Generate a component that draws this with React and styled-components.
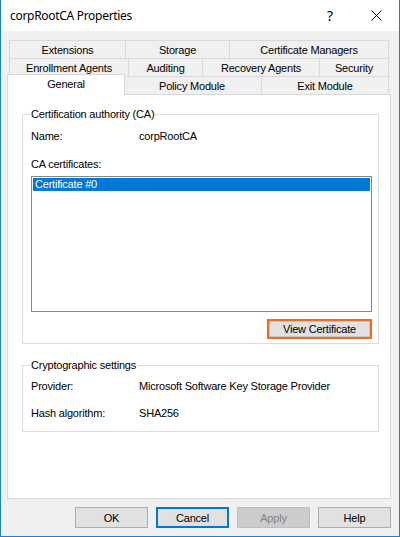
import React from "react";
import styled, { createGlobalStyle } from "styled-components";

const Global = createGlobalStyle`
  html, body { margin: 0; padding: 0; background: #ffffff; }
  body { font-family: "Liberation Sans", Arial, sans-serif; font-size: 11px; letter-spacing: -0.2px; color: #000; }
`;

const Window = styled.div`
  width: 400px;
  height: 537px;
  box-sizing: border-box;
  border: 1px solid #1883d7;
  border-top: none;
  background: #f0f0f0;
  display: flex;
  flex-direction: column;
`;

const TitleBar = styled.div`
  height: 31px;
  background: #ffffff;
  display: flex;
  align-items: center;
  padding-left: 9px;
  flex-shrink: 0;
`;

const Title = styled.div`
  flex: 1;
  font-family: "Noto Sans", "Open Sans", sans-serif;
  font-size: 12px;
  letter-spacing: -0.3px;
  color: #000;
`;

const HelpGlyph = styled.div`
  width: 46px;
  text-align: center;
  font-family: "Noto Sans", sans-serif;
  font-size: 14px;
  color: #000;
`;

const CloseBtn = styled.div`
  width: 46px;
  height: 31px;
  display: flex;
  align-items: center;
  justify-content: center;
`;

const Body = styled.div`
  flex: 1;
  display: flex;
  flex-direction: column;
  padding: 9px 8px 0 6px;
`;

const TabStrip = styled.div`
  display: flex;
  flex-direction: column;
`;

const TabRow = styled.div`
  display: flex;
  align-items: flex-end;
  padding-left: 2px;
  margin-top: ${(p) => p.$mt || 0}px;
  height: ${(p) => p.$h || 19}px;
`;

const Tab = styled.div`
  width: ${(p) => (p.$selected ? p.$w + 4 : p.$w)}px;
  height: ${(p) => (p.$selected ? 21 : 19)}px;
  box-sizing: border-box;
  display: flex;
  align-items: center;
  justify-content: center;
  background: ${(p) => (p.$selected ? "#ffffff" : "#f0f0f0")};
  border: 1px solid #d9d9d9;
  border-left: none;
  ${(p) => (p.$selected ? "border-bottom: none; margin: 0 -2px; position: relative; z-index: 2; padding-bottom: 3px;" : "")}
  &:first-child { border-left: 1px solid #d9d9d9; }
  white-space: nowrap;
`;

const Panel = styled.div`
  width: 384px;
  height: 405px;
  box-sizing: border-box;
  margin-top: -1px;
  background: #ffffff;
  border: 1px solid #d9d9d9;
  padding: 12px 11px 0 14px;
  display: flex;
  flex-direction: column;
  position: relative;
  z-index: 1;
`;

const Group = styled.fieldset`
  margin: ${(p) => p.$mt || 0}px 0 0 0;
  padding: 0 6px ${(p) => p.$pb || 0}px 8px;
  border: 1px solid #dcdcdc;
  min-width: 0;
  display: flex;
  flex-direction: column;
`;

const Legend = styled.legend`
  margin-left: -1px;
  padding: 0 1px;
  line-height: 14px;
  font-size: 11px;
`;

const Row = styled.div`
  display: flex;
  line-height: 13px;
  margin-top: ${(p) => p.$mt || 0}px;
`;

const Label = styled.div`
  width: 108px;
  flex-shrink: 0;
`;

const Value = styled.div``;

const ListBox = styled.div`
  margin-top: 5px;
  height: 136px;
  box-sizing: border-box;
  border: 1px solid #828790;
  padding: 1px;
  background: #fff;
`;

const ListItem = styled.div`
  height: 13px;
  line-height: 13px;
  padding-left: 2px;
  background: ${(p) => (p.$selected ? "#0078d7" : "transparent")};
  color: ${(p) => (p.$selected ? "#ffffff" : "#000")};
`;

const ButtonRight = styled.div`
  display: flex;
  justify-content: flex-end;
  margin-top: 7px;
`;

const HighlightButton = styled.div`
  width: 105px;
  height: 20px;
  box-sizing: border-box;
  border: 2px solid #f26a21;
  box-shadow: inset 0 0 0 1px #c9c9c9;
  background: #e1e1e1;
  display: flex;
  align-items: center;
  justify-content: center;
`;

const Footer = styled.div`
  display: flex;
  justify-content: flex-end;
  gap: 8px;
  margin-top: 8px;
`;

const DlgButton = styled.div`
  width: 73px;
  height: 21px;
  box-sizing: border-box;
  display: flex;
  align-items: center;
  justify-content: center;
  background: ${(p) => (p.$disabled ? "#cccccc" : "#e1e1e1")};
  color: ${(p) => (p.$disabled ? "#838383" : "#000")};
  border: ${(p) => (p.$focused ? "2px solid #0078d7" : p.$disabled ? "1px solid #bfbfbf" : "1px solid #adadad")};
`;

const rows = [
  [
    { t: "Extensions", w: 117 },
    { t: "Storage", w: 104 },
    { t: "Certificate Managers", w: 159 },
  ],
  [
    { t: "Enrollment Agents", w: 120 },
    { t: "Auditing", w: 74 },
    { t: "Recovery Agents", w: 117 },
    { t: "Security", w: 69 },
  ],
];

const lastRow = [
  { t: "General", w: 114, sel: true },
  { t: "Policy Module", w: 139 },
  { t: "Exit Module", w: 127 },
];

export default function App() {
  return (
    <>
      <Global />
      <Window>
        <TitleBar>
          <Title>corpRootCA Properties</Title>
          <HelpGlyph>?</HelpGlyph>
          <CloseBtn>
            <svg width="11" height="11" viewBox="0 0 11 11">
              <path d="M0.5 0.5 L10.5 10.5 M10.5 0.5 L0.5 10.5" stroke="#000" strokeWidth="1" fill="none" />
            </svg>
          </CloseBtn>
        </TitleBar>
        <Body>
          <TabStrip>
            {rows.map((r, i) => (
              <TabRow key={i} $mt={i === 0 ? 0 : -1}>
                {r.map((t) => (
                  <Tab key={t.t} $w={t.w}>{t.t}</Tab>
                ))}
              </TabRow>
            ))}
            <TabRow $mt={-3} $h={21}>
              {lastRow.map((t) => (
                <Tab key={t.t} $w={t.w} $selected={t.sel}>{t.t}</Tab>
              ))}
            </TabRow>
          </TabStrip>
          <Panel>
            <Group $pb={4}>
              <Legend>Certification authority (CA)</Legend>
              <Row $mt={9}>
                <Label>Name:</Label>
                <Value>corpRootCA</Value>
              </Row>
              <Row $mt={15}>
                <Label>CA certificates:</Label>
              </Row>
              <ListBox>
                <ListItem $selected>Certificate #0</ListItem>
              </ListBox>
              <ButtonRight>
                <HighlightButton>View Certificate</HighlightButton>
              </ButtonRight>
            </Group>
            <Group $mt={14} $pb={11}>
              <Legend>Cryptographic settings</Legend>
              <Row $mt={8}>
                <Label>Provider:</Label>
                <Value>Microsoft Software Key Storage Provider</Value>
              </Row>
              <Row $mt={14}>
                <Label>Hash algorithm:</Label>
                <Value>SHA256</Value>
              </Row>
            </Group>
          </Panel>
          <Footer>
            <DlgButton>OK</DlgButton>
            <DlgButton $focused>Cancel</DlgButton>
            <DlgButton $disabled>Apply</DlgButton>
            <DlgButton>Help</DlgButton>
          </Footer>
        </Body>
      </Window>
    </>
  );
}
